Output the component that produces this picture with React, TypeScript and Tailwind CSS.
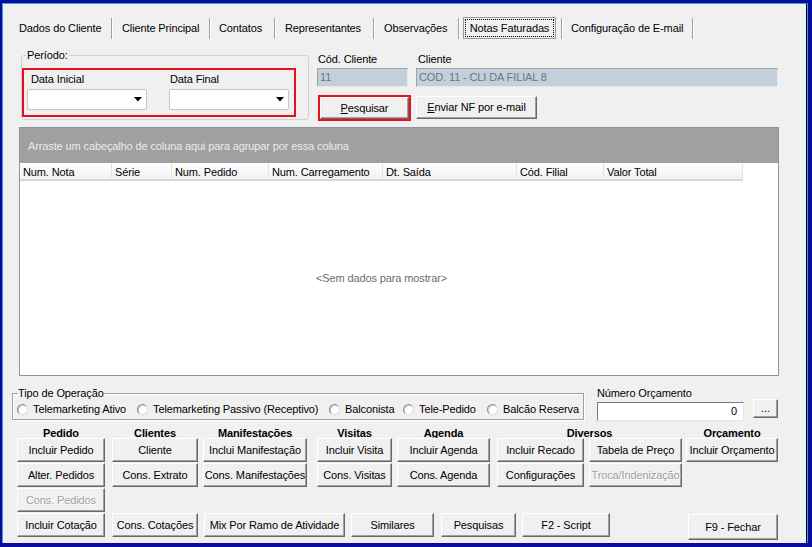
import React from "react";

function Btn({
  children,
  className = "",
  disabled = false,
}: {
  children: React.ReactNode;
  className?: string;
  disabled?: boolean;
}) {
  return (
    <div
      className={
        "flex items-center justify-center whitespace-nowrap bg-[#f0f0f0] border border-t-white border-l-white border-r-[#696969] border-b-[#696969] shadow-[inset_-1px_-1px_0_#a0a0a0] text-[11px] leading-none " +
        (disabled ? "text-[#a0a0a0] [text-shadow:1px_1px_0_#ffffff]" : "text-black") +
        " " +
        className
      }
    >
      {children}
    </div>
  );
}

function Sep() {
  return <div className="w-px h-[21px] self-center bg-[#a0a0a0] shadow-[1px_0_0_#ffffff]" />;
}

function Combo() {
  return (
    <div className="mt-[3px] h-[21px] w-[120px] bg-white border border-[#c6c6c6] rounded-[2px] flex items-center justify-end pr-[4px]">
      <svg width="8" height="5" viewBox="0 0 8 5">
        <polygon points="0,0 8,0 4,4.5" fill="#000" />
      </svg>
    </div>
  );
}

function Radio({ label, w }: { label: string; w?: string }) {
  return (
    <div className={"flex items-center " + (w ?? "")}>
      <div className="w-[11px] h-[11px] rounded-full bg-white border border-t-[#8a8a8a] border-l-[#8a8a8a] border-r-[#dcdcdc] border-b-[#dcdcdc] shadow-[inset_1px_1px_0_#d0d0d0]" />
      <span className="ml-[5px] whitespace-nowrap">{label}</span>
    </div>
  );
}

const cols = [
  { label: "Num. Nota", w: "w-[92px]" },
  { label: "Série", w: "w-[60px]" },
  { label: "Num. Pedido", w: "w-[97px]" },
  { label: "Num. Carregamento", w: "w-[114px]" },
  { label: "Dt. Saída", w: "w-[134px]" },
  { label: "Cód. Filial", w: "w-[87px]" },
  { label: "Valor Total", w: "w-[139px]" },
];

const hdr = "h-[13px] leading-[16px] font-bold text-center whitespace-nowrap";

export default function App() {
  return (
    <div className="w-[812px] h-[547px] bg-[#0a0a9e] pt-[3px] pl-[2px] pr-[5px] pb-[4px] font-['Liberation_Sans',Arial,sans-serif] text-[11px] tracking-[-0.12px] text-black">
      <div className="h-full bg-[#f0f0f0] border-t border-l border-[#29a9d6] border-r border-r-black shadow-[1px_0_0_#29a9d6] flex flex-col">
        {/* Tabs */}
        <div className="mt-[13px] h-[22px] flex items-stretch pl-[16px] whitespace-nowrap">
          <div className="w-[92px] flex items-center">Dados do Cliente</div>
          <Sep />
          <div className="w-[97px] pl-[10px] flex items-center">Cliente Principal</div>
          <Sep />
          <div className="w-[64px] pl-[9px] flex items-center">Contatos</div>
          <Sep />
          <div className="w-[98px] pl-[10px] flex items-center">Representantes</div>
          <Sep />
          <div className="w-[84px] pl-[10px] flex items-center">Observações</div>
          <Sep />
          <div className="w-[102px] pl-[4px] flex items-stretch">
            <div className="w-[93px] border border-[#9a9a9a] p-[1px] flex">
              <div className="flex-1 border border-dotted border-black flex items-center justify-center">
                Notas Faturadas
              </div>
            </div>
          </div>
          <Sep />
          <div className="w-[130px] pl-[9px] flex items-center">Configuração de E-mail</div>
          <Sep />
        </div>

        {/* Período + cliente */}
        <div className="mt-[10px] flex items-start">
          <fieldset className="ml-[18px] w-[288px] border border-[#d0d0d0] rounded-[3px] pt-[6px] pb-[2px]">
            <legend className="ml-[4px] px-[1px] leading-[13px]">Período:</legend>
            <div className="w-[274px] h-[49px] border-2 border-[#e8101a] flex pl-[3px] pt-[3px]">
              <div className="flex flex-col w-[120px]">
                <div className="leading-[13px] pl-[4px]">Data Inicial</div>
                <Combo />
              </div>
              <div className="flex flex-col w-[120px] ml-[22px]">
                <div className="leading-[13px] pl-[1px]">Data Final</div>
                <Combo />
              </div>
            </div>
          </fieldset>

          <div className="ml-[8px] w-[461px] flex flex-col">
            <div className="mt-[4px] flex">
              <div className="w-[91px] flex flex-col">
                <div className="leading-[13px] pl-[1px]">Cód. Cliente</div>
                <div className="mt-[2px] h-[19px] bg-[#c3cfdb] border border-t-[#9aa4ae] border-l-[#9aa4ae] border-r-[#e4e8ec] border-b-[#e4e8ec] flex items-center pl-[2px] text-[#6e7680]">
                  11
                </div>
              </div>
              <div className="ml-[8px] w-[362px] flex flex-col">
                <div className="leading-[13px] pl-[2px]">Cliente</div>
                <div className="mt-[2px] h-[19px] bg-[#c3cfdb] border border-t-[#9aa4ae] border-l-[#9aa4ae] border-r-[#e4e8ec] border-b-[#e4e8ec] flex items-center pl-[2px] text-[#6e7680]">
                  COD. 11 - CLI DA FILIAL 8
                </div>
              </div>
            </div>
            <div className="mt-[8px] flex items-start">
              <div className="ml-[1px] w-[93px] h-[26px] border-2 border-[#e8101a] flex">
                <Btn className="flex-1">
                  <span>
                    <span className="underline">P</span>esquisar
                  </span>
                </Btn>
              </div>
              <Btn className="ml-[5px] mt-[1px] w-[121px] h-[23px]">
                <span>
                  <span className="underline">E</span>nviar NF por e-mail
                </span>
              </Btn>
            </div>
          </div>
        </div>

        {/* Grid */}
        <div className="mt-[6px] ml-[16px] w-[760px] h-[249px] border border-[#8a96a0] bg-white flex flex-col">
          <div className="h-[35px] bg-[#a0a0a0] flex items-center pl-[8px] pt-[2px] text-[#ebebeb] whitespace-nowrap">
            Arraste um cabeçalho de coluna aqui para agrupar por essa coluna
          </div>
          <div className="h-[18px] flex">
            {cols.map((c) => (
              <div
                key={c.label}
                className={
                  c.w +
                  " h-full flex items-center pl-[3px] pt-[2px] whitespace-nowrap bg-gradient-to-b from-white to-[#f1f1f1] border-r border-r-[#e2e2e2] border-b-2 border-b-[#d6d6d6]"
                }
              >
                {c.label}
              </div>
            ))}
          </div>
          <div className="flex-1 flex">
            <div className="w-[723px] flex items-center justify-center text-[#6d6d6d]">
              &lt;Sem dados para mostrar&gt;
            </div>
          </div>
        </div>

        {/* Tipo de Operação + Número Orçamento */}
        <div className="mt-[11px] flex items-start">
          <fieldset className="ml-[9px] w-[572px] border border-[#a0a0a0] shadow-[inset_1px_1px_0_#ffffff,1px_1px_0_#ffffff] pb-0">
            <legend className="ml-[5px] px-0 leading-[12px]">Tipo de Operação</legend>
            <div className="h-[20px] flex items-center pl-[4px] pt-[1px] whitespace-nowrap">
              <Radio label="Telemarketing Ativo" w="w-[120px]" />
              <Radio label="Telemarketing Passivo (Receptivo)" w="w-[192px]" />
              <Radio label="Balconista" w="w-[74px]" />
              <Radio label="Tele-Pedido" w="w-[84px]" />
              <Radio label="Balcão Reserva" />
            </div>
          </fieldset>
          <div className="ml-[13px] flex flex-col">
            <div className="leading-[12px] whitespace-nowrap">Número Orçamento</div>
            <div className="mt-[3px] flex items-start">
              <div className="w-[147px] h-[19px] bg-white border border-t-[#7a7a7a] border-l-[#7a7a7a] border-r-[#e6e6e6] border-b-[#e6e6e6] flex items-center justify-end pr-[6px]">
                0
              </div>
              <Btn className="ml-[9px] -mt-[3px] w-[25px] h-[19px]">...</Btn>
            </div>
          </div>
        </div>

        {/* Button groups */}
        <div className="mt-[4px] flex items-start">
          <div className="ml-[14px] w-[88px] flex flex-col">
            <div className={hdr}>Pedido</div>
            <Btn className="h-[24px]">Incluir Pedido</Btn>
            <Btn className="mt-[1px] h-[24px]">Alter. Pedidos</Btn>
            <Btn className="mt-[1px] h-[24px]" disabled>
              Cons. Pedidos
            </Btn>
          </div>
          <div className="ml-[7px] w-[86px] flex flex-col">
            <div className={hdr}>Clientes</div>
            <Btn className="h-[24px]">Cliente</Btn>
            <Btn className="mt-[1px] h-[24px]">Cons. Extrato</Btn>
          </div>
          <div className="ml-[5px] w-[104px] flex flex-col">
            <div className={hdr}>Manifestações</div>
            <Btn className="h-[24px]">Inclui Manifestação</Btn>
            <Btn className="mt-[1px] h-[24px]">Cons. Manifestações</Btn>
          </div>
          <div className="ml-[10px] w-[75px] flex flex-col">
            <div className={hdr}>Visitas</div>
            <Btn className="h-[24px]">Incluir Visita</Btn>
            <Btn className="mt-[1px] h-[24px]">Cons. Visitas</Btn>
          </div>
          <div className="ml-[5px] w-[93px] flex flex-col">
            <div className={hdr}>Agenda</div>
            <Btn className="h-[24px]">Incluir Agenda</Btn>
            <Btn className="mt-[1px] h-[24px]">Cons. Agenda</Btn>
          </div>
          <div className="ml-[7px] w-[185px] flex flex-col">
            <div className={hdr}>Diversos</div>
            <div className="flex">
              <div className="w-[87px] flex flex-col">
                <Btn className="h-[24px]">Incluir Recado</Btn>
                <Btn className="mt-[1px] h-[24px]">Configurações</Btn>
              </div>
              <div className="ml-[5px] w-[93px] flex flex-col">
                <Btn className="h-[24px]">Tabela de Preço</Btn>
                <Btn className="mt-[1px] h-[24px]" disabled>
                  Troca/Indenização
                </Btn>
              </div>
            </div>
          </div>
          <div className="ml-[4px] w-[92px] flex flex-col">
            <div className={hdr}>Orçamento</div>
            <Btn className="h-[24px]">Incluir Orçamento</Btn>
          </div>
        </div>

        {/* Last row */}
        <div className="mt-[1px] flex items-start">
          <Btn className="ml-[14px] w-[88px] h-[24px]">Incluir Cotação</Btn>
          <Btn className="ml-[7px] w-[86px] h-[24px]">Cons. Cotações</Btn>
          <Btn className="ml-[6px] w-[141px] h-[24px]">Mix Por Ramo de Atividade</Btn>
          <Btn className="ml-[6px] w-[83px] h-[24px]">Similares</Btn>
          <Btn className="ml-[7px] w-[75px] h-[24px]">Pesquisas</Btn>
          <Btn className="ml-[6px] w-[88px] h-[24px]">F2 - Script</Btn>
          <Btn className="ml-[78px] mt-[1px] w-[90px] h-[26px]">F9 - Fechar</Btn>
        </div>
      </div>
    </div>
  );
}
